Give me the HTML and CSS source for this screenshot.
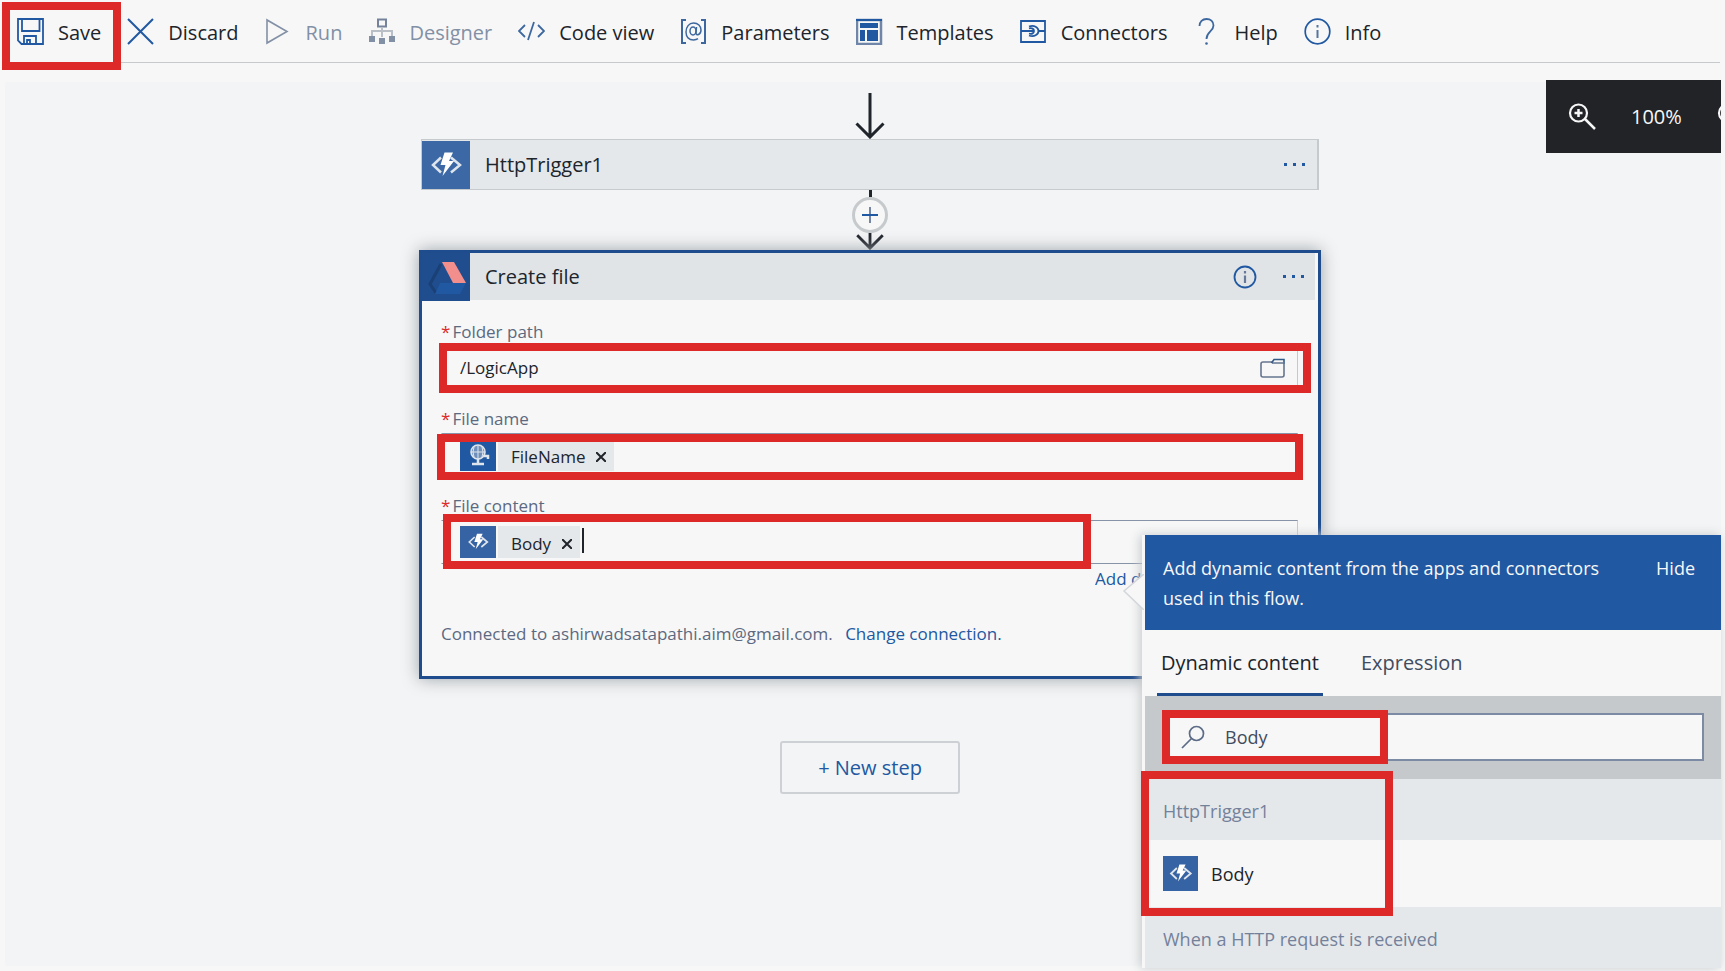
FILE: index.html
```html
<!DOCTYPE html>
<html lang="en">
<head>
<meta charset="utf-8">
<title>Logic App Designer</title>
<link rel="stylesheet" href="styles.css">
</head>
<body>
<svg class="defs" aria-hidden="true">
  <symbol id="function" viewBox="0 0 48 48">
    <path d="M19 16.500 11 24l8 7.500M29 16.500 38 24l-9 7.500" fill="none" stroke="#dfe5ec" stroke-width="2.500"/>
    <path d="M22.500 11.500h8.500l-4 8.500h5L20.500 35l3-11h-5z" fill="#fff"/>
  </symbol>
</svg>

<header class="toolbar">
  <div class="marked">
    <button class="command">
      <svg class="icon" viewBox="0 0 27 27"><path d="M1 1h25v25H4.500L1 22.500zM5 1v12h17.500V1M7 26v-8h12v8M10 26v-4h3v4" fill="none" stroke="#2158a2" stroke-width="1.800"/></svg>Save
    </button>
    <span class="mark mark-save"></span>
  </div>
  <button class="command">
    <svg class="icon" viewBox="0 0 27 27"><path d="M1 1l25 25M26 1 1 26" stroke="#2158a2" stroke-width="2"/></svg>Discard
  </button>
  <button class="command" disabled>
    <svg class="icon" viewBox="0 0 27 27"><path d="M2 2v23l20-11.500z" fill="none" stroke="#8290a5" stroke-width="1.600"/></svg>Run
  </button>
  <button class="command" disabled>
    <svg class="icon" viewBox="0 0 27 27"><path d="M10 1.500h8v7h-8z" fill="none" stroke="#74839b" stroke-width="2"/><path d="M14 9v10M4 19v-6h20v6" fill="none" stroke="#b9bfc7" stroke-width="2"/><path d="M1 18h6v6H1zM11 20h6v6h-6zM21 18h6v6h-6z" fill="#8290a5"/></svg>Designer
  </button>
  <button class="command">
    <svg class="icon" viewBox="0 0 27 27"><path d="M7 7 1 13l6 6M20 7l6 6-6 6M16 4l-6 18" fill="none" stroke="#3c689f" stroke-width="1.800"/></svg>Code view
  </button>
  <button class="command">
    <svg class="icon" viewBox="0 0 27 27"><path d="M6 2H2v23h4M21 2h4v23h-4" fill="none" stroke="#3c689f" stroke-width="2"/><ellipse cx="13" cy="13" rx="3" ry="4" fill="none" stroke="#3c689f" stroke-width="1.500"/><path d="M16.500 9l-.5 6c0 3 5 2 5-3 0-4-3-7-7.500-7C9 5 6 9 6 14s3 8 7.500 8c2 0 3.500-.5 4.500-1.300" fill="none" stroke="#3c689f" stroke-width="1.500"/></svg>Parameters
  </button>
  <button class="command">
    <svg class="icon" viewBox="0 0 27 27"><path d="M1 2h24v24H1z" fill="#f7f7f7" stroke="#6f86a8" stroke-width="2.500"/><path d="M0 1h26v2H0zM4 5h18v5H4zM4 12h5v11H4zM11 12h11v11H11z" fill="#2158a2"/></svg>Templates
  </button>
  <button class="command">
    <svg class="icon" viewBox="0 0 27 27"><path d="M1 3h24v21H1zM1 13h13M19 13h6M9 8.500c5-2 9.500 1 9.500 4.500s-4.500 6.500-9.500 4.500M9 10.500c3-1 5 .5 5 2.500s-2 3.500-5 2.500" fill="none" stroke="#2158a2" stroke-width="1.800"/></svg>Connectors
  </button>
  <button class="command">
    <svg class="icon" viewBox="0 0 27 27"><path d="M6.500 8C6.500 3.500 9.500 1 13.500 1s7 2.500 7 6.500c0 6-7 6-7 13.500" fill="none" stroke="#3c689f" stroke-width="1.800"/><circle cx="13.500" cy="25.500" r="1.300" fill="#3c689f"/></svg>Help
  </button>
  <button class="command">
    <svg class="icon" viewBox="0 0 27 27"><circle cx="13.500" cy="13.500" r="12.300" fill="none" stroke="#2158a2" stroke-width="1.700"/><path d="M13.500 7v2.500M13.500 12v8" stroke="#56749d" stroke-width="2"/></svg>Info
  </button>
</header>

<main class="canvas">
  <div class="flow">
    <svg class="arrow" viewBox="0 0 30 46"><path d="M15 0v44M1.500 30.500 15 44l13.500-13.500" fill="none" stroke="#20242b" stroke-width="3"/></svg>

    <section class="step">
      <svg class="step-icon"><use href="#function"/></svg>
      <h2 class="step-title">HttpTrigger1</h2>
      <button class="more" aria-label="HttpTrigger1 menu"><i></i><i></i><i></i></button>
    </section>

    <div class="link">
      <span class="stem"></span>
      <button class="insert" aria-label="Insert step"><svg viewBox="0 0 16 16"><path d="M8 0v16" stroke="#7486a3" stroke-width="2"/><path d="M0 8h16" stroke="#2158a2" stroke-width="2"/></svg></button>
      <svg class="head" viewBox="0 0 30 18"><path d="M15 0v16M1.500 2.500 15 16 28.500 2.500" fill="none" stroke="#20242b" stroke-width="3"/></svg>
    </div>

    <section class="card">
      <header class="card-head">
        <svg class="step-icon drive" viewBox="0 0 48 48"><path d="M19 11 8 31l6 9" fill="none" stroke="#1b4076" stroke-width="3"/><path d="M18 30h26l-6 11H13z" fill="#2158a2"/><path d="M20 9h12l12 21H31z" fill="#f28e8b"/></svg>
        <h2 class="step-title">Create file</h2>
        <button class="about" aria-label="About this step"><svg viewBox="0 0 24 24"><circle cx="12" cy="12" r="10.500" fill="none" stroke="#2158a2" stroke-width="1.800"/><path d="M12 6v2.500M12 10.500V18" stroke="#66799a" stroke-width="2.200"/></svg></button>
        <button class="more" aria-label="Create file menu"><i></i><i></i><i></i></button>
      </header>
      <div class="card-body">
        <div class="row">
          <label class="label" for="folder"><b>*</b>Folder path</label>
          <div class="field">
            <input class="text" id="folder" value="/LogicApp">
            <button class="browse" aria-label="Browse folders"><svg viewBox="0 0 26 20"><path d="M12 4H3Q1 4 1 6v11q0 2 2 2h19q2 0 2-2V6M12 5h11" fill="none" stroke="#66758e" stroke-width="1.600"/><path d="M11.500 5 14 1.500h10V6" fill="none" stroke="#335987" stroke-width="1.600"/></svg></button>
            <span class="mark mark-folder"></span>
          </div>
        </div>
        <div class="row">
          <div class="label"><b>*</b>File name</div>
          <div class="field">
            <span class="token"><svg class="token-icon request" viewBox="0 0 36 32"><circle cx="18" cy="13" r="7" fill="#6f8fbb" stroke="#dfe5ec" stroke-width="1.600"/><path d="M11 13h14M18 6v14M14 8q-2 5 0 10M22 8q2 5 0 10" fill="none" stroke="#dfe5ec"/><path d="M18 20v4M12 25h12M24 17h4v3" fill="none" stroke="#dfe5ec" stroke-width="2.500"/></svg><span class="token-text">FileName<button class="remove" aria-label="Remove FileName"><svg viewBox="0 0 10 10"><path d="M0 0l10 10M10 0 0 10" stroke="#20242b" stroke-width="2"/></svg></button></span></span>
            <span class="mark mark-name"></span>
          </div>
        </div>
        <div class="row">
          <div class="label"><b>*</b>File content</div>
          <div class="field">
            <span class="token"><svg class="token-icon"><use href="#function"/></svg><span class="token-text">Body<button class="remove" aria-label="Remove Body"><svg viewBox="0 0 10 10"><path d="M0 0l10 10M10 0 0 10" stroke="#20242b" stroke-width="2"/></svg></button></span></span>
            <span class="caret"></span>
            <span class="mark mark-content"></span>
          </div>
          <a class="add" href="#dynamic">Add d</a>
        </div>
        <p class="account">Connected to ashirwadsatapathi.aim@gmail.com. <a href="#connection">Change connection.</a></p>
      </div>
    </section>

    <button class="new-step">+ New step</button>
  </div>

  <div class="zoom">
    <button class="zoom-button" aria-label="Zoom in"><svg viewBox="0 0 28 28"><circle cx="10.500" cy="10" r="8.500" fill="none" stroke="#f7f7f7" stroke-width="2.200"/><path d="M10.500 6v8M6.500 10h8M17 16l10 10" stroke="#f7f7f7" stroke-width="2.500"/></svg></button>
    <span>100%</span>
    <button class="zoom-button" aria-label="Zoom out"><svg viewBox="0 0 28 28"><circle cx="10.500" cy="10" r="8.500" fill="none" stroke="#f7f7f7" stroke-width="2.200"/><path d="M5 10h10M17 16l10 10" stroke="#f7f7f7" stroke-width="2.500"/></svg></button>
  </div>

  <aside class="panel" id="dynamic">
    <svg class="pointer" viewBox="0 0 22 36"><path d="M22 0 2 17l20 19z" fill="#f7f7f7"/><path d="M22 0 2 17l20 19" fill="none" stroke="#d3d6da" stroke-width="1.500"/></svg>
    <header class="panel-head">
      <p>Add dynamic content from the apps and connectors used in this flow.</p>
      <button class="hide">Hide</button>
    </header>
    <nav class="tabs">
      <button class="tab active">Dynamic content</button>
      <button class="tab">Expression</button>
    </nav>
    <div class="search">
      <div class="search-box">
        <svg viewBox="0 0 24 24"><circle cx="15.500" cy="8.500" r="7" fill="none" stroke="#5c6c86" stroke-width="1.700"/><path d="M10.500 13.500 1 23" stroke="#5c6c86" stroke-width="1.700"/></svg>
        <input class="text" aria-label="Search dynamic content" value="Body">
        <span class="mark mark-search"></span>
      </div>
    </div>
    <div class="results">
      <h3 class="group">HttpTrigger1</h3>
      <button class="result"><svg><use href="#function"/></svg>Body</button>
      <span class="mark mark-results"></span>
    </div>
    <h3 class="group">When a HTTP request is received</h3>
  </aside>
</main>
</body>
</html>
```
FILE: styles.css
```css
:root {
  --blue: #2158a2;
  --ink: #20242b;
  --muted: #5c6980;
  --paper: #f7f7f7;
  --fill: #e4e8eb;
  --line: #c6cacd;
  --red: #dd2a28;
}

* { box-sizing: border-box; }

body {
  margin: 0;
  min-height: 100vh;
  display: flex;
  flex-direction: column;
  background: var(--paper);
  color: var(--ink);
  font: 20px/24px "Open Sans", "Noto Sans", sans-serif;
  overflow-x: hidden;
}

button, input { font: inherit; color: inherit; }
button { padding: 0; border: 0; background: none; }
h2, h3, p { margin: 0; font-weight: 400; }
a { color: var(--blue); text-decoration: none; }
svg { display: block; }
.defs { position: absolute; width: 0; height: 0; }

/* Highlight frames drawn over the content */
.mark {
  position: absolute;
  z-index: 3;
  border: 8px solid var(--red);
  pointer-events: none;
}
.marked { position: relative; }
.mark-save { inset: -16px -20px auto -15px; height: 68px; }
.mark-folder { inset: -4px -14px -4px -3px; }
.mark-name { inset: 0 -6px -4px -5px; }
.mark-content { inset: -7px 206px -6px 1px; }
.mark-search { inset: -5px auto -5px -2px; width: 226px; }
.mark-results { inset: -8px auto -9px -4px; width: 252px; }

.toolbar {
  display: flex;
  gap: 26px;
  height: 63px;
  margin: 0 5px;
  padding: 18px 0 0 12px;
  border-bottom: 1px solid var(--line);
}
.command {
  display: flex;
  align-items: flex-end;
  gap: 14px;
  height: 27px;
  line-height: 24px;
  white-space: nowrap;
}
.command:disabled { color: #8290a5; }
.icon { width: 27px; height: 27px; }

.canvas {
  position: relative;
  flex: 1;
  margin: 19px 4px 5px 5px;
  padding: 11px 18px 40px 32px;
  background: #f3f4f5;
}
.flow {
  display: flex;
  flex-direction: column;
  align-items: center;
  max-width: 902px;
  margin: 0 auto;
}
.arrow { width: 30px; height: 46px; }

.step {
  display: flex;
  align-items: center;
  width: calc(100% - 4px);
  height: 51px;
  border: 1px solid var(--line);
  border-right-width: 2px;
  background: var(--fill);
}
.step-icon { flex: none; width: 48px; height: 48px; background: #3c69a6; }
.drive { background: #1f4d8d; }
.step-title { flex: 1; padding-left: 15px; font-size: 20px; }
.more { display: flex; gap: 6px; padding: 12px; }
.more i { width: 3px; height: 3px; background: var(--blue); }

.link { display: flex; flex-direction: column; align-items: center; }
.stem { width: 3px; height: 7px; background: var(--ink); }
.insert {
  display: grid;
  place-items: center;
  width: 36px;
  height: 36px;
  border: 3px solid var(--line);
  border-radius: 50%;
  background: var(--paper);
}
.insert svg { width: 16px; height: 16px; }
.head { width: 30px; height: 17px; }

.card {
  width: 100%;
  border: 3px solid #1f4c8c;
  background: var(--paper);
  box-shadow: 0 0 16px #9da3aa;
}
.card-head {
  display: flex;
  align-items: center;
  height: 47px;
  border-right: 3px solid var(--paper);
  background: #e0e4e7;
}
.about svg { width: 24px; height: 24px; }
.card-head .more { padding: 12px 11px 12px 26px; }

.card-body { padding: 21px 20px 31px 19px; font-size: 17px; line-height: 22px; }
.row { margin-bottom: 18px; }
.label { display: block; margin-bottom: 3px; color: var(--muted); }
.label b { margin-right: 2px; color: var(--red); font-weight: 400; }
.field {
  position: relative;
  display: flex;
  align-items: center;
  height: 44px;
  padding: 0 11px 0 18px;
  border: 1px solid #8794a8;
  border-right-color: var(--line);
  border-left-color: transparent;
}
.text { flex: 1; min-width: 0; padding: 0; border: 0; outline: 0; background: none; }
.browse svg { width: 26px; height: 20px; }
.token { display: flex; gap: 2px; height: 32px; }
.token-icon { width: 36px; height: 32px; background: #3663a3; }
.request { background: var(--blue); }
.token-text { display: flex; align-items: center; gap: 11px; padding: 3px 8px 0 13px; background: var(--fill); }
.remove svg { width: 10px; height: 10px; }
.caret { align-self: flex-start; width: 2px; height: 25px; margin: 7px 0 0 2px; background: var(--ink); }
.add { display: block; width: 47px; margin: 4px 156px 0 auto; overflow: hidden; white-space: nowrap; }
.account { margin-top: 33px; color: var(--muted); }
.account a { margin-left: 8px; }

.new-step {
  width: 180px;
  height: 53px;
  margin-top: 62px;
  border: 2px solid #cdd1d5;
  border-radius: 3px;
  color: var(--blue);
}

.zoom {
  position: absolute;
  top: -2px;
  right: 0;
  display: flex;
  align-items: center;
  gap: 35px;
  width: 175px;
  height: 73px;
  padding-left: 22px;
  overflow: hidden;
  background: #212327;
  color: var(--paper);
}
.zoom-button svg { width: 28px; height: 28px; }

.panel {
  position: absolute;
  top: 453px;
  right: 0;
  width: 579px;
  padding-left: 3px;
  background: var(--paper);
  box-shadow: -2px 0 10px #c6cacd;
}
.pointer { position: absolute; top: 39px; left: -20px; width: 22px; height: 36px; }
.panel-head {
  display: flex;
  justify-content: space-between;
  align-items: flex-start;
  height: 95px;
  padding: 18px 26px 0 18px;
  background: var(--blue);
  color: var(--paper);
  font-size: 18px;
  line-height: 30px;
}
.panel-head p { max-width: 460px; }
.tabs { display: flex; gap: 34px; height: 66px; padding-left: 12px; }
.tab { padding: 2px 4px 0; border-bottom: 3px solid transparent; color: #414c60; }
.active { border-color: #1f4c8c; color: var(--ink); }
.search { padding: 17px 17px 18px; background: #c6c9cc; }
.search-box {
  position: relative;
  display: flex;
  align-items: center;
  gap: 20px;
  height: 48px;
  padding-left: 17px;
  border: 2px solid #7c8ba3;
  background: var(--paper);
  color: #414c60;
  font-size: 18px;
}
.search-box svg { width: 24px; height: 24px; }
.results { position: relative; }
.group { height: 61px; padding: 4px 18px 0; background: var(--fill); color: #74819a; font-size: 18px; line-height: 56px; }
.result { display: flex; align-items: center; gap: 13px; width: 100%; height: 67px; padding-left: 18px; font-size: 18px; }
.result svg { width: 35px; height: 35px; background: #3663a3; }
```
